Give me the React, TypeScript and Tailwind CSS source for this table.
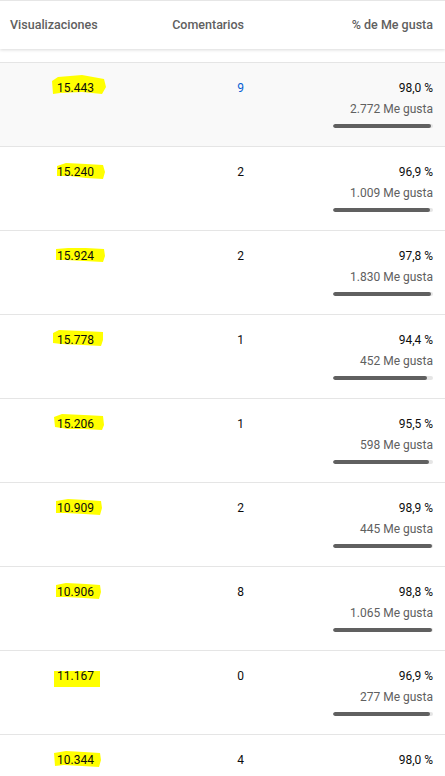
import React from "react";

type Row = {
  views: string;
  comments: string;
  blue?: boolean;
  pct: string;
  likes: string;
  fill: number;
  shape: string;
  hl: { l: number; t: number; w: number; h: number };
};

const rows: Row[] = [
  { views: "15.443", comments: "9", blue: true, pct: "98,0 %", likes: "2.772 Me gusta", fill: 98, shape: "0,6 6,2 30,0 52,4 54,12 50,19 30,17 8,18 1,19", hl: { l: -5, t: -8, w: 54, h: 20 } },
  { views: "15.240", comments: "2", pct: "96,9 %", likes: "1.009 Me gusta", fill: 96.9, shape: "1,4 10,1 30,2 47,3 49,10 47,17 30,16 14,14 1,14", hl: { l: -1, t: -5, w: 49, h: 18 } },
  { views: "15.924", comments: "2", pct: "97,8 %", likes: "1.830 Me gusta", fill: 97.8, shape: "0,3 12,2 30,2 48,3 49,10 47,16 28,15 10,14 0,14", hl: { l: -1, t: -5, w: 49, h: 17 } },
  { views: "15.778", comments: "1", pct: "94,4 %", likes: "452 Me gusta", fill: 94.4, shape: "0,5 6,2 30,3 50,4 50,12 48,18 30,17 8,16 0,15", hl: { l: -4, t: -7, w: 51, h: 19 } },
  { views: "15.206", comments: "1", pct: "95,5 %", likes: "598 Me gusta", fill: 95.5, shape: "0,4 8,1 30,2 49,3 50,12 48,17 30,16 14,16 1,14", hl: { l: -3, t: -6, w: 50, h: 18 } },
  { views: "10.909", comments: "2", pct: "98,9 %", likes: "445 Me gusta", fill: 98.9, shape: "0,3 12,1 30,2 45,3 46,10 44,17 28,16 10,15 0,15", hl: { l: -1, t: -5, w: 46, h: 18 } },
  { views: "10.906", comments: "8", pct: "98,8 %", likes: "1.065 Me gusta", fill: 98.8, shape: "0,3 10,1 30,2 44,3 45,10 43,17 28,16 10,15 0,15", hl: { l: -1, t: -5, w: 45, h: 18 } },
  { views: "11.167", comments: "0", pct: "96,9 %", likes: "277 Me gusta", fill: 96.9, shape: "0,0 46,0 46,16 0,16", hl: { l: -3, t: 0, w: 46, h: 16 } },
  { views: "10.344", comments: "4", pct: "98,0 %", likes: "675 Me gusta", fill: 98, shape: "0,3 12,1 30,2 46,3 47,10 45,17 28,16 10,15 1,16", hl: { l: -3, t: -5, w: 47, h: 18 } },
];

function Highlight({ r }: { r: Row }) {
  return (
    <svg
      className="absolute"
      style={{ left: r.hl.l, top: r.hl.t + 4, width: r.hl.w, height: r.hl.h }}
      viewBox={`0 0 ${r.hl.w} ${r.hl.h}`}
      preserveAspectRatio="none"
    >
      <polygon points={r.shape} fill="#ffff00" />
    </svg>
  );
}

export default function App() {
  return (
    <div
      className="w-[445px] h-[776px] overflow-hidden bg-white text-[12px]"
      style={{ fontFamily: "Roboto, 'Liberation Sans', sans-serif" }}
    >
      <div className="h-[49px] border-t border-[#e6e6e6] bg-white shadow-[0_1px_3px_rgba(0,0,0,0.15)] relative z-10 grid grid-cols-[110px_134px_1fr] items-center font-medium text-[12.5px] text-[#606060]">
        <div className="pl-[10px]">Visualizaciones</div>
        <div className="text-right">Comentarios</div>
        <div className="text-right pr-[12px]">% de Me gusta</div>
      </div>
      <div className="h-[13px]" />
      {rows.map((r, i) => (
        <div
          key={i}
          className={`h-[84px] border-t border-[#e5e5e5] grid grid-cols-[110px_134px_1fr] items-start ${i === 0 ? "bg-[#f9f9f9]" : "bg-white"}`}
        >
          <div className="pt-[16px] pl-[57px] leading-[18px] text-[#0d0d0d]">
            <span className="relative inline-block">
              <Highlight r={r} />
              <span className="relative">{r.views}</span>
            </span>
          </div>
          <div className={`pt-[16px] leading-[18px] text-right ${r.blue ? "text-[#065fd4]" : "text-[#0d0d0d]"}`}>
            {r.comments}
          </div>
          <div className="pt-[16px] pr-[12px] flex flex-col items-end">
            <div className="leading-[18px] text-[#0d0d0d]">{r.pct}</div>
            <div className="mt-[3px] leading-[18px] text-[#606060]">{r.likes}</div>
            <div className="mt-[6px] w-[100px] h-[4px] rounded-full bg-[#e5e5e5] overflow-hidden">
              <div className="h-full rounded-full bg-[#606060]" style={{ width: `${r.fill}%` }} />
            </div>
          </div>
        </div>
      ))}
    </div>
  );
}
